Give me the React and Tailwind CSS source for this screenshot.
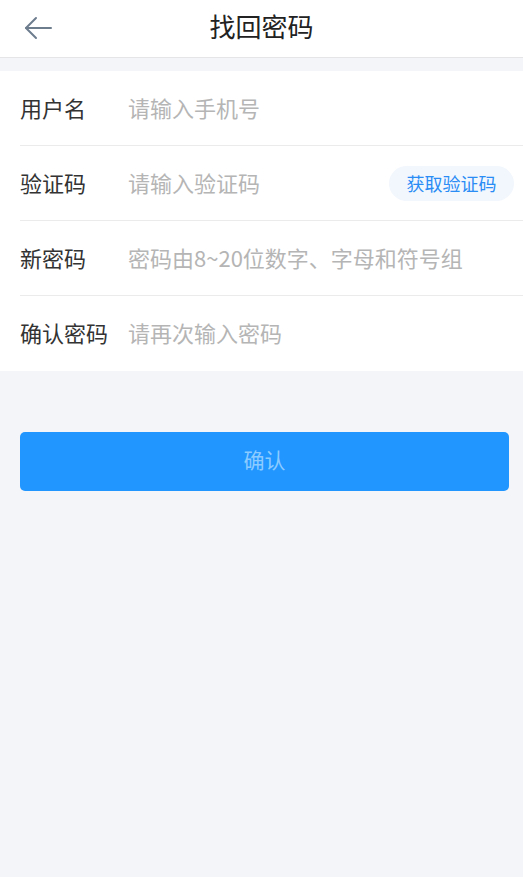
import React from 'react';

const rows = [
  { label: '用户名', placeholder: '请输入手机号' },
  { label: '验证码', placeholder: '请输入验证码', code: true },
  { label: '新密码', placeholder: '密码由8~20位数字、字母和符号组' },
  { label: '确认密码', placeholder: '请再次输入密码' },
];

export default function App() {
  return (
    <div
      className="min-h-[877px] bg-[#f4f5f9] text-[#333]"
      style={{ fontFamily: '"Noto Sans CJK SC", "Noto Sans", sans-serif' }}
    >
      {/* header */}
      <div className="relative flex h-[58px] items-center justify-center border-b border-[#e5e5e8] bg-white">
        <button className="absolute left-[23px] top-[16px] p-0">
          <svg width="30" height="24" viewBox="0 0 30 24" fill="none" stroke="#6e7d8e" strokeWidth="2" strokeLinecap="round" strokeLinejoin="round">
            <path d="M3 12h25" />
            <path d="M13 2L3 12l10 10" />
          </svg>
        </button>
        <h1 className="-mt-[5px] text-[26px] font-normal leading-none text-[#222]">找回密码</h1>
      </div>

      {/* form */}
      <div className="mt-[13px] bg-white">
        {rows.map((r, i) => (
          <div key={r.label} className="flex h-[75px] items-center pl-5">
            <div
              className={`flex h-full flex-1 items-center ${i < rows.length - 1 ? 'border-b border-[#ebebeb]' : ''}`}
            >
              <span className="-mt-[3px] w-[108px] shrink-0 text-[22px] leading-none text-[#333]">{r.label}</span>
              <span className="-mt-[3px] flex-1 whitespace-nowrap text-[22px] leading-none text-[#b5b5b5]">{r.placeholder}</span>
              {r.code && (
                <button className="mr-[9px] flex h-[35px] w-[125px] shrink-0 items-center justify-center rounded-full bg-[#f2f7fd] text-[18px] leading-none text-[#2a8cf5]">
                  获取验证码
                </button>
              )}
            </div>
          </div>
        ))}
      </div>

      <div className="pl-5 pr-[14px] pt-[61px]">
        <button className="flex h-[59px] w-full items-center justify-center rounded-[5px] bg-[#2196ff] pb-[4px] text-[21px] leading-none text-[#8ccbff]">
          确认
        </button>
      </div>
    </div>
  );
}
